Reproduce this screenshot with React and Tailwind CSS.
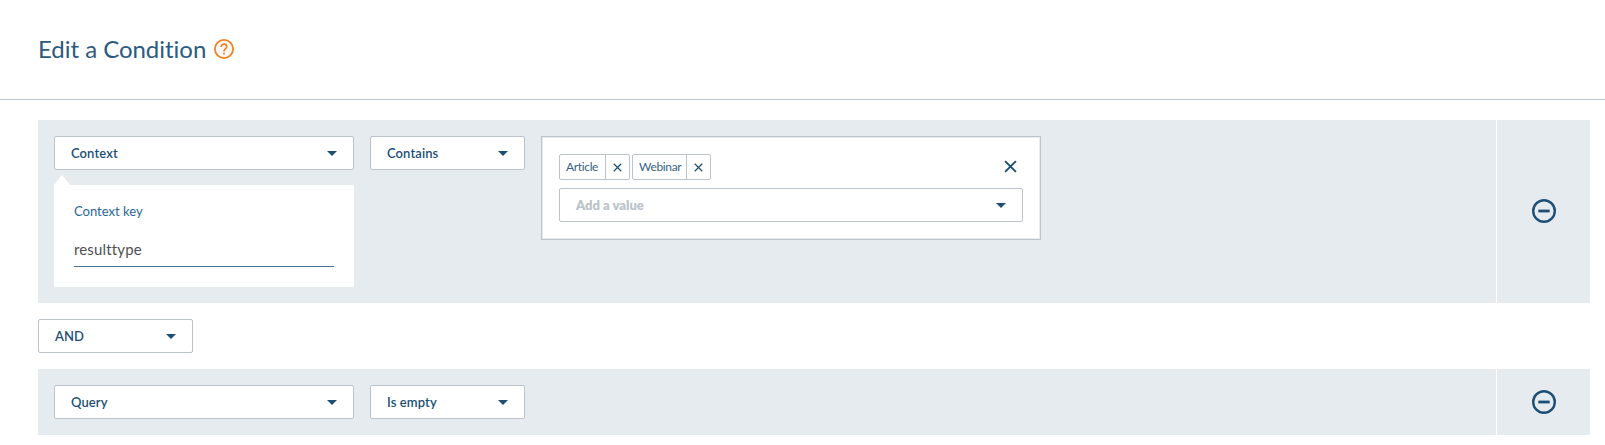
function Caret() {
  return (
    <svg className="h-[5px] w-2.5 shrink-0" viewBox="0 0 10 5">
      <path d="M0 0h10L5 5z" fill="#1d4f76" />
    </svg>
  );
}

function Select({ label, className, labelClass = "font-semibold tracking-[0.1px] text-[#1d4f76]" }) {
  return (
    <button
      className={
        "flex h-[34px] shrink-0 items-center justify-between rounded-[2px] border border-[#bcc3ca] bg-white px-4 text-[13px] " +
        className
      }
    >
      <span className={"pt-0.5 " + labelClass}>{label}</span>
      <Caret />
    </button>
  );
}

function Cross({ className, strokeWidth }) {
  return (
    <svg className={className} viewBox="0 0 12 12" fill="none" stroke="#1d4f76" strokeWidth={strokeWidth}>
      <path d="M1 1l10 10M11 1L1 11" />
    </svg>
  );
}

function Tag({ label, className }) {
  return (
    <div className={"flex h-[26px] rounded-[2px] border border-[#bcc3ca] bg-white " + className}>
      <span className="flex flex-1 items-center pl-1.5 text-[12px] tracking-[-0.35px] text-[#376384]">{label}</span>
      <button className="flex w-6 items-center justify-center border-l border-[#bcc3ca]">
        <Cross className="size-[9px]" strokeWidth={1.6} />
      </button>
    </div>
  );
}

function Row({ children, className }) {
  return (
    <section className={"flex gap-px " + className}>
      <div className="flex flex-1 items-start gap-4 bg-[#e6ebef] p-4">{children}</div>
      <div className="flex w-[93px] items-center justify-center bg-[#e6ebef]">
        <svg className="size-6" viewBox="0 0 24 24" fill="none" stroke="#1d4f76">
          <circle cx="12" cy="12" r="10.8" strokeWidth="2.4" />
          <path d="M6.3 12h11.4" strokeWidth="2.8" />
        </svg>
      </div>
    </section>
  );
}

export default function App() {
  return (
    <main className="h-[445px] bg-white font-['Lato',sans-serif] [font-variant-ligatures:none]">
      <header className="flex h-[100px] items-center gap-2 border-b border-[#bcc3ca] pb-px pl-[38px]">
        <h1 className="w-[168px] text-[24px] leading-[30px] tracking-[-0.03px] whitespace-nowrap text-[#2b5b80]">Edit a Condition</h1>
        <svg className="size-5" viewBox="0 0 20 20" fill="none" stroke="#f58220">
          <circle cx="10" cy="10" r="9.1" strokeWidth="1.8" fill="#f8f9fa" />
          <path d="M7.2 8c0-1.8 1.2-2.8 2.8-2.8s2.8 1 2.8 2.6c0 2-2.8 2.2-2.8 4.6" strokeWidth="1.7" />
          <path d="M10 13.8v1.8" strokeWidth="1.8" />
        </svg>
      </header>
      <div className="flex flex-col gap-4 pt-5 pr-[15px] pl-[38px]">
        <Row className="h-[183px] [&>div:last-child]:pb-px">
          <div className="flex w-[300px] flex-col">
            <Select label="Context" className="w-full" />
            <svg className="mt-[5px] h-2.5 w-4" viewBox="0 0 16 10">
              <path d="M0 10L8 0l8 10z" fill="#fff" />
            </svg>
            <div className="h-[102px] rounded-[2px] rounded-tl-none bg-white px-5 pt-[17px]">
              <div className="text-[13px] leading-[18px] text-[#296896]">Context key</div>
              <div className="mt-4 h-[31px] border-b border-[#537595] text-[15px] leading-[27px] tracking-[0.15px] text-[#505050]">
                resulttype
              </div>
            </div>
          </div>
          <Select label="Contains" className="w-[155px]" />
          <div className="flex h-[104px] w-[500px] flex-col gap-2 border border-[#bcc3ca] bg-white p-[17px] shadow-[inset_0_0_0_1px_#e9edf0]">
            <div className="flex items-center justify-between pr-[5px]">
              <div className="flex gap-0.5">
                <Tag label="Article" className="w-[71px]" />
                <Tag label="Webinar" className="w-[79px]" />
              </div>
              <Cross className="mr-px mb-px size-[13px]" strokeWidth={1.8} />
            </div>
            <Select label="Add a value" className="w-full" labelClass="font-extrabold text-[#bcc3ca]" />
          </div>
        </Row>
        <Select label="AND" className="w-[155px]" />
        <Row className="h-[66px]">
          <Select label="Query" className="w-[300px]" />
          <Select label="Is empty" className="w-[155px]" />
        </Row>
      </div>
    </main>
  );
}
